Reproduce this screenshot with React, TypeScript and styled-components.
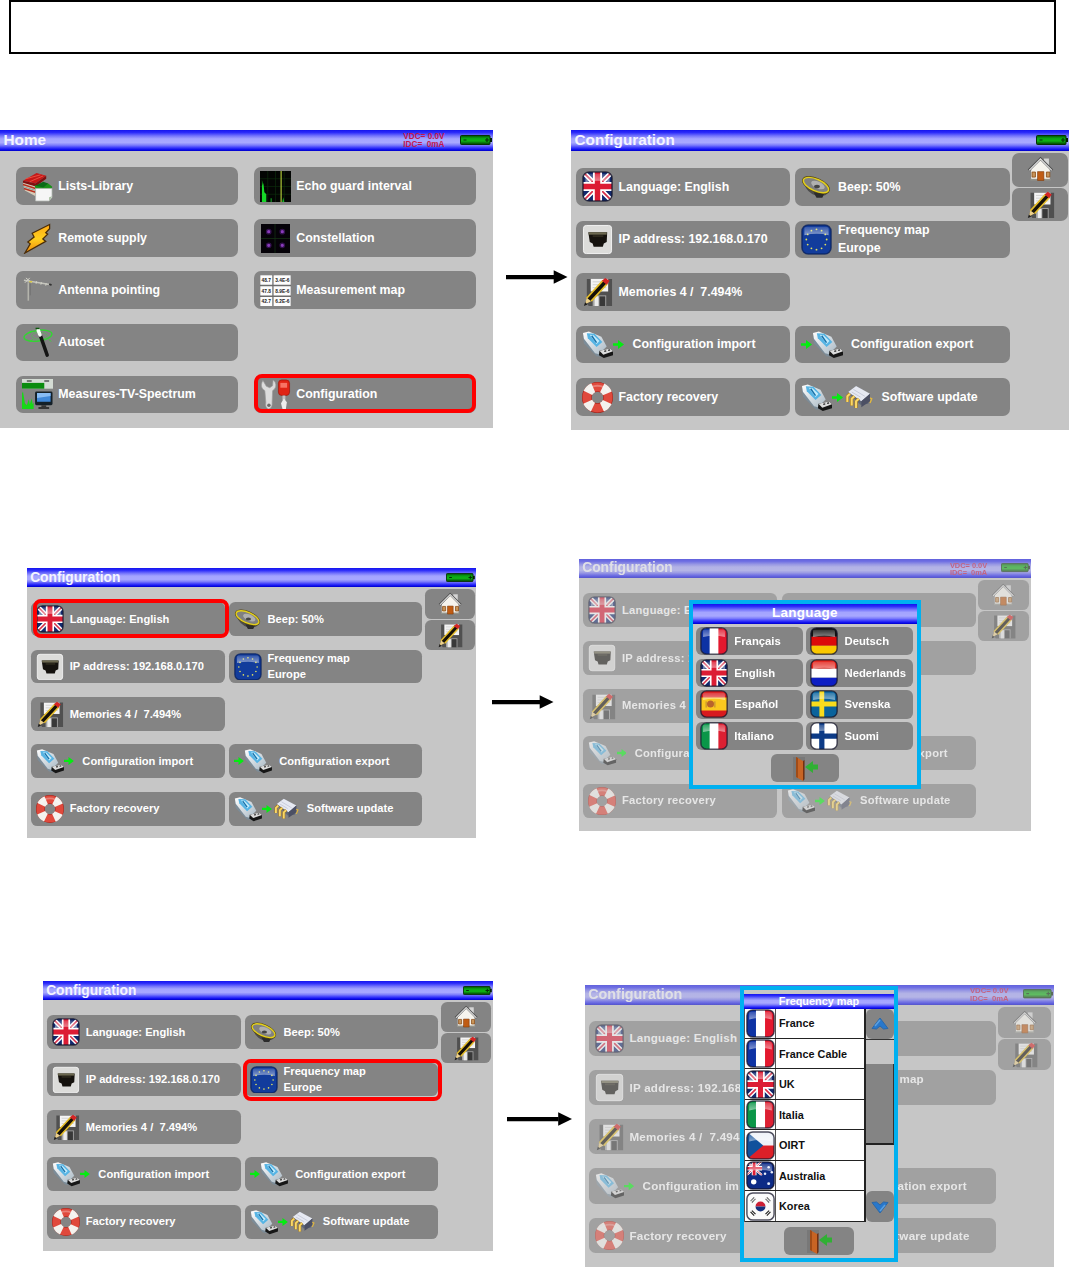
import React from "react";
import styled, { createGlobalStyle, css } from "styled-components";

/* Every device screen is laid out in a unit --u, so one layout serves all sizes. */
const u = (n: number) => `calc(var(--u) * ${n})`;

const GlobalStyle = createGlobalStyle`
  * { box-sizing: border-box; }
  body { margin: 0; background: #fff; }
`;

const Page = styled.main`
  width: 1069px;
  height: 1267px;
  overflow: hidden;
  background: #fff;
  font-family: "Liberation Sans", Arial, sans-serif;
`;

const TitleBox = styled.header`
  width: 1047px;
  height: 54px;
  margin-left: 9px;
  border: 2px solid #000;
`;

const Step = styled.section<{ $top: number; $left: number; $height: number }>`
  display: flex;
  align-items: flex-start;
  height: ${(p) => p.$height}px;
  margin-top: ${(p) => p.$top}px;
  padding-left: ${(p) => p.$left}px;
`;

const ArrowSlot = styled.div<{ $w: number; $top: number; $pad: number }>`
  flex: none;
  width: ${(p) => p.$w}px;
  padding: ${(p) => p.$top}px 0 0 ${(p) => p.$pad}px;
  line-height: 0;
`;

const Device = styled.div<{ $top?: number }>`
  position: relative;
  flex: none;
  margin-top: ${(p) => p.$top ?? 0}px;
`;

const Screen = styled.div<{ $u: number; $w: number; $h: number; $faded?: boolean }>`
  --u: ${(p) => p.$u}px;
  width: ${(p) => p.$w}px;
  height: ${(p) => p.$h}px;
  background: #c6c6c6;
  overflow: hidden;
  color: #fff;
  ${(p) =>
    p.$faded &&
    css`
      --spacing: 0.24px;
      & > * {
        filter: blur(0.55px);
        opacity: 0.56;
      }
    `}
`;

const barFill = css`
  background: linear-gradient(
    #1414ee 0%, #2b2bfa 12%, #7474fc 28%, #a4a4ff 42%, #a8a8ff 60%,
    #7d7dfc 72%, #3a3afb 84%, #0b0bee 94%, #0000c4 100%
  );
`;

const Bar = styled.div<{ $lift: number }>`
  ${barFill}
  display: flex;
  align-items: center;
  height: ${u(21)};
  padding: 0 ${u(1.5)} ${(p) => p.$lift}px ${u(3.5)};
`;

const BarTitle = styled.h2`
  flex: 1;
  margin: 0;
  font-size: ${u(15.3)};
  line-height: 1;
  font-weight: 700;
  color: #f4f4ff;
`;

const Volts = styled.pre`
  margin: ${u(2)} ${u(15)} 0 0;
  font-family: inherit;
  font-size: ${u(8.2)};
  line-height: ${u(8)};
  font-weight: 700;
  color: #c2184c;
`;

const Body = styled.div`
  display: flex;
  align-items: flex-start;
`;

const HomeGrid = styled.div`
  display: grid;
  grid-template-columns: 222px 222px;
  grid-auto-rows: 37.5px;
  gap: 14.6px 16px;
  padding: 16.3px 0 0 15.8px;
`;

const ConfigGrid = styled.div`
  display: grid;
  grid-template-columns: ${u(214.8)} ${u(214.8)};
  grid-auto-rows: ${u(37.5)};
  gap: ${u(15.1)} ${u(4.7)};
  padding: ${u(17)} 0 0 ${u(4.5)};
`;

const Side = styled.div`
  display: grid;
  gap: ${u(1)};
  padding: ${u(2)} 0 0 ${u(2.4)};
`;

const SideButton = styled.div`
  display: flex;
  align-items: center;
  justify-content: center;
  width: ${u(56)};
  height: ${u(33.5)};
  border-radius: ${u(7)};
  background: #848484;
`;

const Button = styled.div`
  position: relative;
  display: flex;
  align-items: center;
  padding-left: ${u(6)};
  border-radius: ${u(7)};
  background: #848484;
`;

const Label = styled.span<{ $gap?: number }>`
  margin-left: ${(p) => u(p.$gap ?? 6)};
  font-size: ${u(12.38)};
  line-height: ${u(18.5)};
  font-weight: 700;
  letter-spacing: var(--spacing, 0);
  white-space: pre;
  color: #fff;
`;

const Highlight = styled.i<{ $inset: string }>`
  position: absolute;
  inset: ${(p) => p.$inset};
  border: 4.5px solid #fe0000;
  border-radius: 8px;
`;

const Svg = styled.svg<{ $w?: number; $h?: number }>`
  flex: none;
  display: block;
  width: ${(p) => u(p.$w ?? 31)};
  height: ${(p) => u(p.$h ?? 31)};
`;

const Empty = styled.div``;

/* ---------- popups ---------- */

const Popup = styled.div<{ $x: number; $y: number; $w: number; $h: number }>`
  --u: 1px;
  position: absolute;
  left: ${(p) => p.$x}px;
  top: ${(p) => p.$y}px;
  width: ${(p) => p.$w}px;
  height: ${(p) => p.$h}px;
  border: 4.7px solid #00b0f0;
  background: #c6c6c6;
  display: flex;
  flex-direction: column;
  align-items: center;
`;

const PopupTitle = styled.div<{ $h: number; $size: number; $spacing?: number }>`
  ${barFill}
  width: 100%;
  height: ${(p) => p.$h}px;
  line-height: ${(p) => p.$h - 1}px;
  text-align: center;
  color: #fff;
  font-weight: 700;
  font-size: ${(p) => p.$size}px;
  letter-spacing: ${(p) => p.$spacing ?? 0}px;
`;

const LangGrid = styled.div`
  display: grid;
  width: 100%;
  grid-template-columns: 106.5px 107px;
  grid-auto-rows: 28.3px;
  gap: 3.4px 3.7px;
  padding: 3.4px 0 0 3px;
`;

const LangButton = styled.div`
  display: flex;
  align-items: center;
  padding-left: 4px;
  border-radius: 6px;
  background: #848484;
  color: #fff;
  font-weight: 700;
  font-size: 11.3px;
  filter: blur(0.3px);
`;

const LangName = styled.span`
  margin-left: 6.3px;
`;

const ExitButton = styled.div<{ $top: number; $w: number }>`
  display: flex;
  align-items: center;
  justify-content: center;
  width: ${(p) => p.$w}px;
  height: 28.5px;
  margin-top: ${(p) => p.$top}px;
  border-radius: 6px;
  background: #848484;
  filter: blur(0.5px);
`;

const MapBody = styled.div`
  display: flex;
  width: 100%;
  height: 213.3px;
`;

const MapList = styled.div`
  flex: 1;
  display: grid;
  grid-template-rows: repeat(7, 1fr);
  border-left: 1px solid #555;
`;

const MapRow = styled.div`
  display: flex;
  align-items: center;
  background: #fff;
  border-bottom: 1.4px solid #222;
  color: #111;
  font-weight: 700;
  font-size: 10.85px;
`;

const FlagCell = styled.div`
  width: 31px;
  height: 100%;
  display: flex;
  align-items: center;
  justify-content: center;
  border-right: 1px solid #555;
  margin-right: 3px;
`;

const Scroll = styled.div`
  width: 30px;
  display: flex;
  flex-direction: column;
  border-left: 2px solid #222;
`;

const ScrollButton = styled.div`
  display: flex;
  align-items: center;
  justify-content: center;
  height: 30.4px;
  border-radius: 6px;
  background: #848484;
`;

const Track = styled.div`
  flex: 1;
  padding-top: 24px;
  border-top: 1.5px solid #333;
`;

const Thumb = styled.div`
  height: 81px;
  background: #848484;
  border-bottom: 2px solid #222;
  border-right: 1px solid #333;
`;

/* ---------- icons ---------- */

const Arrow = ({ w }: { w: number }) => (
  <svg width={w} height="14" viewBox={`0 0 ${w} 14`}>
    <path d={`M0 5h${w - 13.5}v4.2H0z`} />
    <path d={`M${w - 13.8} .3L${w} 7l-${13.8} 6.7z`} />
  </svg>
);

const Battery = () => (
  <Svg $w={32} $h={10} viewBox="0 0 32 10">
    <defs>
      <linearGradient id="bat" x2="0" y2="1">
        <stop offset="0" stopColor="#004a00" />
        <stop offset=".3" stopColor="#0aa014" />
        <stop offset=".6" stopColor="#0fb414" />
        <stop offset="1" stopColor="#023a02" />
      </linearGradient>
    </defs>
    <rect x=".5" y=".5" width="29.5" height="9" rx="1" fill="url(#bat)" stroke="#043204" />
    <rect x="30" y="3" width="2" height="4" fill="#002000" />
    <path d="M3.5 5h3M25 5h4M27 3v4" stroke="#043204" strokeWidth="1.2" />
  </Svg>
);

type FlagName =
  | "uk" | "fr" | "es" | "it" | "de" | "nl" | "se" | "fi" | "cz" | "au" | "kr" | "eu";

const unionJack = (
  <>
    <path fill="#12296e" d="M0 0h32v32H0z" />
    <path d="M0 0l32 32M32 0L0 32" stroke="#fff" strokeWidth="5" />
    <path d="M0 0l32 32M32 0L0 32" stroke="#d8304a" strokeWidth="1.8" />
    <path d="M16 0v32M0 16h32" stroke="#fff" strokeWidth="9.4" />
    <path d="M16 0v32M0 16h32" stroke="#dc1c34" strokeWidth="5.6" />
  </>
);

const vertical = (a: string, c: string) => (
  <>
    <path fill="#fff" d="M0 0h32v32H0z" />
    <path fill={a} d="M0 0h11v32H0z" />
    <path fill={c} d="M21 0h11v32H21z" />
  </>
);

const horizontal = (a: string, b: string, c: string) => (
  <>
    <path fill={a} d="M0 0h32v11H0z" />
    <path fill={b} d="M0 11h32v10.500H0z" />
    <path fill={c} d="M0 21.500h32V32H0z" />
  </>
);

const flagArt: Record<FlagName, React.ReactNode> = {
  uk: unionJack,
  fr: vertical("#0d32a4", "#e3182e"),
  it: vertical("#0a9648", "#dc2032"),
  de: horizontal("#111", "#dc0a0a", "#fac800"),
  nl: horizontal("#e4241c", "#fff", "#0d1ec4"),
  es: (
    <>
      <path fill="#d81a1e" d="M0 0h32v32H0z" />
      <path fill="#fac81e" d="M0 8.500h32v15H0z" />
      <circle cx="12" cy="16" r="4" fill="#b8642c" />
      <path d="M7 13v7M17 13v7" stroke="#b07a3c" />
    </>
  ),
  se: (
    <>
      <path fill="#0a639c" d="M0 0h32v32H0z" />
      <path d="M13.500 0v32M0 16h32" stroke="#f8dc1c" strokeWidth="5.500" />
    </>
  ),
  fi: (
    <>
      <path fill="#fff" d="M0 0h32v32H0z" />
      <path d="M13.500 0v32M0 16h32" stroke="#0c3a86" strokeWidth="6" />
    </>
  ),
  cz: (
    <>
      <path fill="#eef2f8" d="M0 0h32v16H0z" />
      <path fill="#dc2028" d="M0 16h32v16H0z" />
      <path fill="#11519c" d="M0 0l19 16L0 32z" />
    </>
  ),
  au: (
    <>
      <path fill="#0c2a86" d="M0 0h32v32H0z" />
      <g transform="scale(.56 .5)">{unionJack}</g>
      <path fill="#0c2a86" d="M18 0h14v32H0V16h18z" />
      <circle cx="8.500" cy="23" r="3" fill="#fff" />
      <g fill="#e8eefc">
        <circle cx="25" cy="7" r="1.400" /><circle cx="21" cy="14" r="1.400" />
        <circle cx="28.500" cy="12.500" r="1.400" /><circle cx="25" cy="25" r="1.600" />
      </g>
    </>
  ),
  kr: (
    <>
      <path fill="#fafafa" d="M0 0h32v32H0z" />
      <path fill="#cc1f36" d="M10.500 16a5.500 5.500 0 0 1 11 0z" />
      <path fill="#16317c" d="M10.500 16a5.500 5.500 0 0 0 11 0z" />
      <path d="M5 10l4-4M6.500 11.500l4-4M23 6l4 4M21.500 7.500l4 4M5 22l4 4M6.500 20.500l4 4M23 26l4-4M21.500 24.500l4-4" stroke="#222" strokeWidth="1.300" />
    </>
  ),
  eu: (
    <>
      <path fill="#123c9c" d="M0 0h32v32H0z" />
      <g fill="#e0e060">
        {Array.from({ length: 12 }, (_, i) => {
          const a = (i * Math.PI) / 6;
          return <circle key={i} cx={16 + 10.5 * Math.sin(a)} cy={16 - 10.5 * Math.cos(a)} r=".95" />;
        })}
      </g>
    </>
  ),
};

const Flag = ({ name, size = 31 }: { name: FlagName; size?: number }) => (
  <Svg $w={size} $h={size} viewBox="0 0 32 32">
    <defs>
      <clipPath id="flagClip"><rect x="1" y="1" width="30" height="30" rx="6.5" /></clipPath>
      <linearGradient id="gloss" x2="0" y2="1">
        <stop offset="0" stopColor="#fff" stopOpacity=".15" />
        <stop offset="1" stopColor="#fff" stopOpacity=".5" />
      </linearGradient>
    </defs>
    <g clipPath="url(#flagClip)">
      {flagArt[name]}
      <path d="M3.500 4q0-1 2-1h21q2 0 2 2v6.500q-12-3-25 0z" fill="url(#gloss)" />
    </g>
    <rect x="1" y="1" width="30" height="30" rx="6.5" fill="none" stroke={name === "eu" ? "#08205c" : "#14142a"} strokeOpacity=".75" strokeWidth="1.6" />
  </Svg>
);

const Books = () => (
  <Svg viewBox="0 0 32 32">
    <path d="M1 10l14-8 10 3-11 8z" fill="#c41818" />
    <path d="M1 10l13 3 11-8v3l-11 8L1 13z" fill="#801010" />
    <path d="M1 12l13 4v10L3 20z" fill="#d8ccb8" />
    <path d="M1 14l13 4M2 18l12 4" stroke="#b83020" strokeWidth="1.500" />
    <path d="M1 16l13 4" stroke="#8aa0a0" />
    <path d="M4 8l15-4M8 11l14-6" stroke="#ec5040" />
    <path d="M13 15l14-2 4 3v8H16z" fill="#189018" />
    <path d="M14 15l8-4 5 2-5 4z" fill="#0a6a18" />
    <path d="M14 18h17v9l-3 4H14z" fill="#f6f6f6" stroke="#b0b4b0" strokeWidth=".8" />
    <path d="M31 26l-3 1v4z" fill="#a8c0a0" />
  </Svg>
);

const Bolt = () => (
  <Svg viewBox="0 0 32 32">
    <defs>
      <linearGradient id="bolt" x2="0" y2="1">
        <stop offset="0" stopColor="#ffa814" />
        <stop offset=".5" stopColor="#ffd020" />
        <stop offset="1" stopColor="#f08808" />
      </linearGradient>
    </defs>
    <path d="M28.500 1.500L10.500 10.500l2 4-6.500 5 2.500 2-5.500 9.500L24.500 19l-3-2.500 5-5-2-1.500 4-4z" fill="url(#bolt)" stroke="#4a2c08" strokeWidth="1.300" />
  </Svg>
);

const Antenna = () => (
  <Svg viewBox="0 0 32 32">
    <path d="M2 5.500l28 4.500" stroke="#c4c4bc" strokeWidth="1.500" />
    <path d="M4 3l6 5M3 8l5-5M15 6.500l-.5 2.500M20 7.500l-.5 2.500M25 8.500l-.5 2.500" stroke="#d4d4c8" />
    <path d="M6.500 7.500v19" stroke="#b4b4ac" strokeWidth="1.600" />
    <path d="M8.500 9v12" stroke="#6c6c6c" strokeWidth=".8" />
    <path d="M7.500 7h3" stroke="#d8c840" strokeWidth="1.500" />
    <path d="M28 9.500l2.500 1" stroke="#333" strokeWidth="2" />
  </Svg>
);

const Wand = () => (
  <Svg viewBox="0 0 32 32">
    <ellipse cx="16.500" cy="9" rx="14.500" ry="5.500" fill="none" stroke="#34d434" strokeWidth="1.500" transform="rotate(-8 16.500 9)" />
    <ellipse cx="18" cy="9" rx="8" ry="3.500" fill="none" stroke="#58b858" strokeWidth=".8" />
    <path d="M18 6l8 23" stroke="#141414" strokeWidth="3.600" strokeLinecap="round" />
    <path d="M16.800 3.500l1.800 4.500" stroke="#f4fff4" strokeWidth="3.800" strokeLinecap="round" />
    <path d="M14 1.500h4" stroke="#0a5a0a" strokeWidth="1.500" />
    <path d="M8 15l3-2M6 6l4-2M28 13l2 2" stroke="#30e030" />
  </Svg>
);

const Spectrum = () => (
  <Svg viewBox="0 0 32 32">
    <path d="M0 0h32v10H0z" fill="#d4dcd4" />
    <path d="M0 4h23v6H0z" fill="#0a8c0e" />
    <path d="M5 2h5M23 2h5" stroke="#555" strokeWidth="1.500" />
    <path d="M0 31V15l1-2 2 12 2 2 2-6 1 5 2-6 1 6 1-2v7z" fill="#18d818" />
    <rect x="13.500" y="13" width="18" height="14" rx="1.500" fill="#142028" />
    <path d="M15.500 14.500h14v9h-14z" fill="#4088d8" />
    <path d="M15.500 14.500h14v3l-14 2z" fill="#88bcf4" />
    <path d="M20 27h5v2h3v2H17v-2h3z" fill="#343434" />
  </Svg>
);

const Echo = () => (
  <Svg viewBox="0 0 32 32">
    <path d="M0 0h32v32H0z" fill="#030503" />
    <path d="M0 8h32M0 16h32M0 24h32M8 0v32M16 0v32M25 0v32" stroke="#0c2c0c" strokeWidth=".7" />
    <path d="M2 32V9l1 6 .5-3 1 10 2 2V32z" fill="#16d828" />
    <path d="M11 32v-4h1v4zM23 32l1-5 1 5z" fill="#16b828" />
    <path d="M21.800 0v32" stroke="#b4cc38" strokeWidth="1.200" />
  </Svg>
);

const Constellation = () => (
  <Svg viewBox="0 0 32 32">
    <path d="M1 1h30v30H1z" fill="#050208" />
    <path d="M15.500 1v30M1 16h30" stroke="#143014" strokeWidth=".8" />
    <g fill="#8a3cbc" stroke="#32104c" strokeWidth="1.300">
      <circle cx="9" cy="9" r="2.300" /><circle cx="23" cy="9" r="2.300" />
      <circle cx="9" cy="23" r="2.300" /><circle cx="23" cy="23" r="2.300" />
    </g>
  </Svg>
);

const MapIcon = () => (
  <Svg viewBox="0 0 32 32">
    <path d="M0 0h32v32H0z" fill="#6c6c6c" />
    {[0, 11.2, 22.4].map((y) => (
      <path key={y} d={`M.3 ${y + 0.3}h12.400v9.700H.3zM14 ${y + 0.3}h17.700v9.700H14z`} fill="#fdfdfd" />
    ))}
    <g fontFamily="Liberation Sans" fontWeight="700" fontSize="5" fill="#222">
      <text x="1.500" y="7">48.7</text><text x="15.800" y="7">3.4E-6</text>
      <text x="1.500" y="18.200">47.8</text><text x="15.800" y="18.200">8.9E-6</text>
      <text x="1.500" y="29.400">42.7</text><text x="15.800" y="29.400">6.2E-6</text>
    </g>
  </Svg>
);

const Tools = () => (
  <Svg viewBox="0 0 32 32">
    <path d="M3 1.500l-1 2Q0 9 5 12l1 12q-1 6 3 7 4-1 3.500-7L13 12q5-3 2.500-9l-2-2-.5 6-3 2-3.500-1.500z" fill="#dcdcdc" stroke="#9c9c9c" strokeWidth=".7" />
    <circle cx="9.200" cy="27" r="1.800" fill="#6c6c6c" />
    <rect x="19" y="1" width="11.500" height="16" rx="3.500" fill="#e02414" stroke="#a01208" strokeWidth=".7" />
    <path d="M21 4h7v5h-7z" fill="#f87464" />
    <path d="M23.200 17h3v5h-3z" fill="#c4c4c4" />
    <path d="M24.700 20l3 4-1 7h-3.500l-1.500-6z" fill="#eee" />
  </Svg>
);

const Ethernet = () => (
  <Svg viewBox="0 0 32 32">
    <rect x="1.500" y="1.500" width="29" height="29" rx="3" fill="#dcdcda" stroke="#f4f4f4" />
    <path d="M6.500 8.500h19.500l-.5 10-3 1.500-1 3.500h-9.500l-1-3.500-3-1.500z" fill="#15120e" />
    <path d="M7 8.500h18.500v2.500H7z" fill="#6c6850" />
    <path d="M11 11.500h11v2H11z" fill="#2c281c" />
  </Svg>
);

const FloppyPencil = ({ size = 31 }: { size?: number }) => (
  <Svg $w={size} $h={size} viewBox="0 0 32 32">
    <path d="M5 3h26v28H7l-2-3z" fill="#505050" />
    <path d="M9 3h18v13H9z" fill="#f4f4f4" />
    <path d="M11 6h14M11 9h14M11 12h14" stroke="#d0d0d0" />
    <path d="M11 20h14v11H11z" fill="#a4a4a4" />
    <path d="M18 21h6v10h-6z" fill="#383838" />
    <path d="M13 21h4v10h-4z" fill="#ececec" />
    <path d="M3 29.500l2-7L22 4l4.500 3.500L9.500 26z" fill="#151008" />
    <path d="M4.800 23L21.500 4.800M9.500 26L26 8" stroke="#e4bc28" strokeWidth="1.800" />
    <path d="M4.800 22.500L3 29.500l6.500-3.500z" fill="#ecd08c" />
    <path d="M2 31l1.200-4 2.500 2.500z" fill="#1c1c1c" />
    <path d="M20.500 5l3.500-3 4.500 3-3 4z" fill="#d42424" />
  </Svg>
);

const Usb = () => (
  <Svg $w={31} viewBox="0 0 32 32">
    <defs>
      <linearGradient id="usb" x2="1" y2="1">
        <stop offset="0" stopColor="#fff" />
        <stop offset="1" stopColor="#a8b8c4" />
      </linearGradient>
    </defs>
    <path d="M1 8l1 7 13 13 7 1 3-3-4-10L12 4 2 4z" fill="#7c8c98" />
    <path d="M1 4l6-1.500L20 8l5.500 10-8 8-4-1L2 10z" fill="url(#usb)" />
    <path d="M5 4.500L13 5l8 8.500-6 5L6 9.500z" fill="#56b4e4" />
    <path d="M8 6l4 .500 6 6-3 3z" fill="#c4ecfc" />
    <path d="M10 7l5 7" stroke="#1870a8" strokeWidth="1.500" />
    <path d="M18 22.500l11-2.500 3 3v4l-9.500 3-5-3z" fill="#161616" />
    <path d="M18 22.500l11-2.500 3 3-10 3.500z" fill="#dcdcdc" />
    <path d="M23 23l2-.500M27 22l2-.500" stroke="#222" strokeWidth="1.300" />
  </Svg>
);

const Green = () => (
  <Svg $w={11} $h={11} viewBox="0 0 11 11">
    <path d="M0 4.200h5V1l6 4.500-6 4.500V6.800H0z" fill="#04ec10" />
  </Svg>
);

const Chip = () => (
  <Svg $w={31} viewBox="0 0 32 32">
    <g transform="translate(1.800 2.500) scale(.9 .87)">
      <path d="M4 10l9-8 16 10-2 11-9 1z" fill="#606878" />
      <path d="M4 9l9-7 16 9-10 9z" fill="#e6e9f2" />
      <path d="M19 20l10-9v9l-10 7z" fill="#4c5064" />
      <path d="M10 6l13 8M8 9l10 6" stroke="#c0c4d4" />
      <path d="M6 11l-3 3v7M11 14l-3 3v8M16 17l-3 3v8" fill="none" stroke="#a87410" strokeWidth="3.600" strokeLinejoin="round" />
      <path d="M6 11l-3 3v7M11 14l-3 3v8M16 17l-3 3v8" fill="none" stroke="#f8d868" strokeWidth="2.400" strokeLinejoin="round" />
      <path d="M29 16l2 1-2 5" stroke="#e4b83c" strokeWidth="1.500" fill="none" />
    </g>
  </Svg>
);

const Buoy = () => (
  <Svg viewBox="0 0 32 32">
    <circle cx="16" cy="16" r="11" fill="none" stroke="#9c2018" strokeWidth="10" />
    <circle cx="16" cy="16" r="11" fill="none" stroke="#e0493c" strokeWidth="9" />
    <circle cx="16" cy="16" r="11" fill="none" stroke="#f4f2ee" strokeWidth="10" strokeDasharray="7.8 9.48" strokeDashoffset="-4.700" />
    <path d="M5 10a13 13 0 0 1 22 0" fill="none" stroke="#fff" strokeOpacity=".3" strokeWidth="2" />
  </Svg>
);

const Speaker = () => (
  <Svg viewBox="0 0 32 32">
    <path d="M3 12q3 11 14 14l8-1 4-3z" fill="#4c4c4c" />
    <path d="M13 22l3 5.500h6l2-4z" fill="#2c2c2c" />
    <ellipse cx="15.500" cy="14.500" rx="14" ry="6" transform="rotate(24 15.500 14.500)" fill="#787878" stroke="#55460c" strokeWidth="2.800" />
    <ellipse cx="15.500" cy="14.500" rx="14" ry="6" transform="rotate(24 15.500 14.500)" fill="#808080" stroke="#e4d01c" strokeWidth="1.500" />
    <ellipse cx="17.500" cy="14.500" rx="7.500" ry="3.500" transform="rotate(24 17.500 14.500)" fill="#b0b0b0" />
    <ellipse cx="16.500" cy="16" rx="3" ry="1.800" fill="#444" />
  </Svg>
);

const House = () => (
  <Svg $w={27} $h={27} viewBox="0 0 32 32">
    <path d="M20 3h6v9h-6z" fill="#d4d4d4" />
    <path d="M5 15L16 4l11 11v13H5z" fill="#f6f4ee" />
    <path d="M2 17L16 3l14 14" fill="none" stroke="#4c4c4c" strokeWidth="3" />
    <path d="M2.500 17L16 3.500 29.500 17" fill="none" stroke="#dcdcdc" strokeWidth="1.500" />
    <path d="M4 27h24v2H4z" fill="#94948c" />
    <path d="M12.500 18.500h7.500v10.500h-7.500z" fill="#c05c14" stroke="#7c3808" strokeWidth=".7" />
    <path d="M6 19h4v6H6zM23 19h4v6h-4z" fill="#c89458" stroke="#8a4c18" />
  </Svg>
);

const Exit = () => (
  <Svg $w={32} $h={27} viewBox="0 0 32 27">
    <path d="M4 2h12v23H4z" fill="#787878" />
    <path d="M7 2l7 4v20l-7-4z" fill="#c86424" />
    <path d="M7 2l2 1v20l-2-1z" fill="#a04c18" />
    <path d="M14 6l1.500-1v19L14 26z" fill="#743010" />
    <path d="M29 9.500h-5V6l-8 6 8 6v-3.500h5z" fill="#30b034" />
  </Svg>
);

const Chevron = ({ down }: { down?: boolean }) => (
  <Svg $w={20} $h={16} viewBox="0 0 20 16">
    <g transform={down ? "rotate(180 10 8)" : undefined}>
      <path d="M2 12.500L10 2l8 10.500-4.500.500L10 10l-3.500 3z" fill="#2878cc" stroke="#2c68a8" />
      <path d="M5 10l5-6" stroke="#5ca0e0" strokeWidth="1.500" />
    </g>
  </Svg>
);

/* ---------- screens ---------- */

const TopBar = ({ title, volts, lift = 0 }: { title: string; volts?: boolean; lift?: number }) => (
  <Bar $lift={lift}>
    <BarTitle>{title}</BarTitle>
    {volts && <Volts>{"VDC= 0.0V\nIDC=  0mA"}</Volts>}
    <Battery />
  </Bar>
);

const homeItems: ([React.ReactNode, string] | null)[] = [
  [<Books />, "Lists-Library"], [<Echo />, "Echo guard interval"],
  [<Bolt />, "Remote supply"], [<Constellation />, "Constellation"],
  [<Antenna />, "Antenna pointing"], [<MapIcon />, "Measurement map"],
  [<Wand />, "Autoset"], null,
  [<Spectrum />, "Measures-TV-Spectrum"], [<Tools />, "Configuration"],
];

const HomeScreen = () => (
  <Screen $u={1} $w={493} $h={298}>
    <TopBar title="Home" volts lift={1} />
    <HomeGrid>
      {homeItems.map((item, i) =>
        item ? (
          <Button key={i}>
            {item[0]}
            <Label $gap={5.5}>{item[1]}</Label>
            {item[1] === "Configuration" && <Highlight $inset="-2px 0 0 0" />}
          </Button>
        ) : (
          <Empty key={i} />
        )
      )}
    </HomeGrid>
  </Screen>
);

type ConfigProps = {
  scale: number;
  width: number;
  height: number;
  lift?: number;
  faded?: boolean;
  mark?: "language" | "map";
  /* labels that an open popup covers entirely */
  covered?: ("beep" | "map")[];
};

const ConfigScreen = ({ scale, width, height, lift, faded, mark, covered = [] }: ConfigProps) => (
  <Screen $u={scale} $w={width} $h={height} $faded={faded}>
    <TopBar title="Configuration" volts={faded} lift={lift} />
    <Body>
      <ConfigGrid>
        <Button>
          <Flag name="uk" /><Label>Language: English</Label>
          {mark === "language" && <Highlight $inset="-3px -4px -2px 2px" />}
        </Button>
        <Button><Speaker />{!covered.includes("beep") && <Label>Beep: 50%</Label>}</Button>
        <Button><Ethernet /><Label>IP address: 192.168.0.170</Label></Button>
        <Button>
          <Flag name="eu" />
          {!covered.includes("map") && <Label>{"Frequency map\nEurope"}</Label>}
          {mark === "map" && <Highlight $inset="-4px -3.5px -5px -1.5px" />}
        </Button>
        <Button><FloppyPencil /><Label>{"Memories 4 /  7.494%"}</Label></Button>
        <Empty />
        <Button><Usb /><Green /><Label $gap={9}>Configuration import</Label></Button>
        <Button><Green /><Usb /><Label $gap={8}>Configuration export</Label></Button>
        <Button><Buoy /><Label>Factory recovery</Label></Button>
        <Button><Usb /><Green /><Chip /><Label $gap={7.5}>Software update</Label></Button>
      </ConfigGrid>
      <Side>
        <SideButton><House /></SideButton>
        <SideButton><FloppyPencil size={29} /></SideButton>
      </Side>
    </Body>
  </Screen>
);

const languages: [FlagName, string][] = [
  ["fr", "Français"], ["de", "Deutsch"],
  ["uk", "English"], ["nl", "Nederlands"],
  ["es", "Español"], ["se", "Svenska"],
  ["it", "Italiano"], ["fi", "Suomi"],
];

const maps: [FlagName, string][] = [
  ["fr", "France"], ["fr", "France Cable"], ["uk", "UK"], ["it", "Italia"],
  ["cz", "OIRT"], ["au", "Australia"], ["kr", "Korea"],
];

const LanguagePopup = () => (
  <Popup $x={110} $y={41} $w={232} $h={189}>
    <PopupTitle $h={19.5} $size={13.5} $spacing={0.25}>Language</PopupTitle>
    <LangGrid>
      {languages.map(([flag, name]) => (
        <LangButton key={name}><Flag name={flag} size={28} /><LangName>{name}</LangName></LangButton>
      ))}
    </LangGrid>
    <ExitButton $top={3.6} $w={68}><Exit /></ExitButton>
  </Popup>
);

const MapSpace = styled.div`
  flex: none;
  height: 3.5px;
`;

const MapPopup = () => (
  <Popup $x={155} $y={1} $w={158} $h={276}>
    <MapSpace />
    <PopupTitle $h={15} $size={10.9}>Frequency map</PopupTitle>
    <MapBody>
      <MapList>
        {maps.map(([flag, name]) => (
          <MapRow key={name}>
            <FlagCell><Flag name={flag} size={29} /></FlagCell>
            {name}
          </MapRow>
        ))}
      </MapList>
      <Scroll>
        <ScrollButton><Chevron /></ScrollButton>
        <Track><Thumb /></Track>
        <ScrollButton><Chevron down /></ScrollButton>
      </Scroll>
    </MapBody>
    <ExitButton $top={5} $w={70}><Exit /></ExitButton>
  </Popup>
);

export default function App() {
  return (
    <Page>
      <GlobalStyle />
      <TitleBox />
      <Step $top={76} $left={0} $height={300}>
        <Device><HomeScreen /></Device>
        <ArrowSlot $w={78} $top={139.5} $pad={13}><Arrow w={61.5} /></ArrowSlot>
        <Device><ConfigScreen scale={1} width={498} height={300} lift={1} /></Device>
      </Step>
      <Step $top={129} $left={27} $height={279}>
        <Device $top={9}><ConfigScreen scale={0.901} width={449} height={270} mark="language" /></Device>
        <ArrowSlot $w={103} $top={135.5} $pad={16}><Arrow w={61.5} /></ArrowSlot>
        <Device>
          <ConfigScreen scale={0.905} width={452} height={272} lift={1} faded covered={["beep", "map"]} />
          <LanguagePopup />
        </Device>
      </Step>
      <Step $top={143} $left={43} $height={286}>
        <Device><ConfigScreen scale={0.901} width={450} height={270} mark="map" /></Device>
        <ArrowSlot $w={92} $top={131} $pad={14}><Arrow w={65} /></ArrowSlot>
        <Device $top={4}>
          <ConfigScreen scale={0.937} width={469} height={282} lift={2} faded covered={["beep"]} />
          <MapPopup />
        </Device>
      </Step>
    </Page>
  );
}
